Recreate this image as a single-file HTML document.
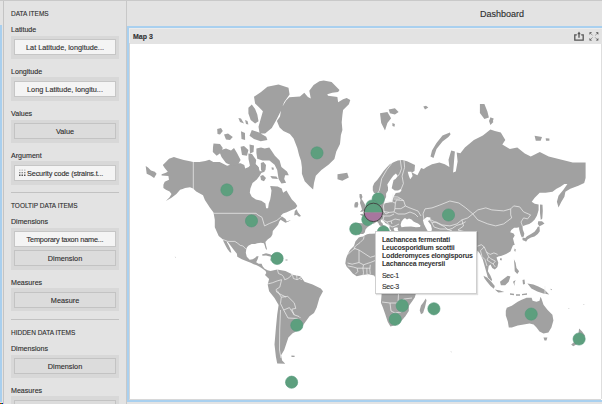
<!DOCTYPE html>
<html><head><meta charset="utf-8">
<style>
*{margin:0;padding:0;box-sizing:border-box}
html,body{width:602px;height:404px;overflow:hidden;background:#e3e3e3;font-family:"Liberation Sans",sans-serif;color:#333}
.abs{position:absolute}
#topline{left:0;top:0;width:602px;height:1px;background:#c9c9c9}
#lstrip{left:0;top:25px;width:2px;height:377px;background:#a9cfee}
#rgb{left:0;top:403px;width:3px;height:1px;background:linear-gradient(90deg,#e00 0,#e00 1px,#0b0 1px,#0b0 2px,#00d 2px)}
#lpanel{left:3px;top:1px;width:124px;height:403px;background:#e3e3e3;border-left:1px solid #c4c4c4;border-right:1px solid #c8c8c8}
.t{position:absolute;font-size:7.1px;white-space:nowrap;color:#2e2e2e;line-height:10px;-webkit-text-stroke:0.12px #2e2e2e}
.hd{letter-spacing:0;transform:scaleX(0.915);transform-origin:0 0}
.cont{position:absolute;left:11px;width:108px;background:#d8d8d8}
.btn{position:absolute;left:3px;width:102px;height:16px;border:1px solid #c6c6c6;font-size:7.3px;text-align:center;line-height:15px;color:#2e2e2e;white-space:nowrap;-webkit-text-stroke:0.12px #2e2e2e}
.w{background:#f4f4f4}
.g{background:#dcdcdc;border-color:#c3c3c3}
.sep{position:absolute;left:11px;width:108px;height:1px;background:#c2c2c2}
#title{left:127px;top:1px;width:475px;height:25px}
#map{left:127px;top:26px;width:475px;height:376px;border:2px solid #a9d0ef;border-right:none;background:#fff}
#mhead{left:0;top:0;width:473px;height:16px;background:#e3e3e3;border-top:1px solid #ececec;border-left:1px solid #ececec}
#rline{left:601px;top:44px;width:1px;height:355px;background:#dedede}
#mapsvg{position:absolute;left:129px;top:44px;width:472px;height:355px;overflow:hidden}
#tip{position:absolute;left:375px;top:231px;width:102px;height:63px;background:#fff;border:1px solid #cfcfcf;box-shadow:1px 1px 1px rgba(0,0,0,0.12)}
#tip div{position:absolute;left:6px;font-size:7px;white-space:nowrap;color:#2b2b2b;line-height:8px}
#tip .b{font-weight:bold;letter-spacing:-0.2px;color:#333}
#tip .s{letter-spacing:-0.3px;-webkit-text-stroke:0.1px #2b2b2b}
</style></head><body>
<div class="abs" id="topline"></div>
<div class="abs" id="lpanel"></div>
<div class="abs" id="lstrip"></div>
<div class="abs" id="rgb"></div>

<div class="t hd" style="left:11px;top:9px">DATA ITEMS</div>
<div class="t" style="left:11px;top:25px">Latitude</div>
<div class="cont" style="top:36px;height:23px"><div class="btn w" style="top:3px">Lat Latitude, longitude...</div></div>
<div class="t" style="left:11px;top:67px">Longitude</div>
<div class="cont" style="top:77px;height:24px"><div class="btn w" style="top:4px">Long Latitude, longitu...</div></div>
<div class="t" style="left:11px;top:109px">Values</div>
<div class="cont" style="top:120px;height:23px"><div class="btn g" style="top:3px">Value</div></div>
<div class="t" style="left:11px;top:151px">Argument</div>
<div class="cont" style="top:161px;height:24px"><div class="btn w" style="top:4px;text-align:left;padding-left:12px;letter-spacing:-0.15px">Security code (strains.t...</div><svg class="abs" style="left:0;top:0" width="108" height="24"><g><rect x="8" y="8.5" width="1.5" height="1.3" fill="#c4c4c4"/><rect x="10.5" y="8.5" width="1.5" height="1.3" fill="#c4c4c4"/><rect x="13" y="8.5" width="1.5" height="1.3" fill="#c4c4c4"/><rect x="8" y="11" width="1.5" height="1.3" fill="#8a8a8a"/><rect x="10.5" y="11" width="1.5" height="1.3" fill="#8a8a8a"/><rect x="13" y="11" width="1.5" height="1.3" fill="#8a8a8a"/><rect x="8" y="13.5" width="1.5" height="1.5" fill="#555"/><rect x="10.5" y="13.5" width="1.5" height="1.5" fill="#555"/><rect x="13" y="13.5" width="1.5" height="1.5" fill="#555"/></g></svg></div>
<div class="sep" style="top:192px"></div>
<div class="t hd" style="left:11px;top:201px">TOOLTIP DATA ITEMS</div>
<div class="t" style="left:11px;top:217px">Dimensions</div>
<div class="cont" style="top:228px;height:42px"><div class="btn w" style="top:3px;letter-spacing:-0.17px">Temporary taxon name...</div><div class="btn g" style="top:22px">Dimension</div></div>
<div class="t" style="left:11px;top:278px">Measures</div>
<div class="cont" style="top:288px;height:23px"><div class="btn g" style="top:4px">Measure</div></div>
<div class="sep" style="top:319px"></div>
<div class="t hd" style="left:11px;top:328px">HIDDEN DATA ITEMS</div>
<div class="t" style="left:11px;top:344px">Dimensions</div>
<div class="cont" style="top:355px;height:23px"><div class="btn g" style="top:3px">Dimension</div></div>
<div class="t" style="left:11px;top:386px">Measures</div>
<div class="cont" style="top:396px;height:23px"><div class="btn g" style="top:4px">&nbsp;</div></div>

<div class="abs" id="title"><div class="t" style="left:353px;top:7px;font-size:9px;line-height:12px">Dashboard</div></div>
<div class="abs" id="map">
  <div class="abs" id="mhead"><div class="t" style="left:3px;top:3px;font-size:7px;font-weight:bold;color:#333">Map 3</div></div>
</div>
<div class="abs" id="rline"></div>
<div class="abs" style="left:129px;top:43px;width:1px;height:357px;background:#d4d4d4"></div>
<div class="abs" style="left:129px;top:399px;width:472px;height:1px;background:#d8d8d8"></div>
<svg class="abs" style="left:570px;top:28px" width="32" height="16" viewBox="570 28 32 16"><g fill="none" stroke="#555" stroke-width="1.3"><path d="M576.8,34.9 H574.8 V40.2 H583.2 V34.9 H581.2"/><path d="M579,37.8 V33"/></g><path d="M577.3,34.2 L579,31.6 L580.7,34.2Z" fill="#555"/><g fill="#4a4a4a"><path d="M589.5,32.3 L592,32.3 L589.5,34.8Z"/><path d="M598.3,32.3 L595.8,32.3 L598.3,34.8Z"/><path d="M589.5,40.5 L592,40.5 L589.5,38Z"/><path d="M598.3,40.5 L595.8,40.5 L598.3,38Z"/></g><g stroke="#888" stroke-width="0.8"><path d="M590.5,33.3 L592.6,35.4 M597.3,33.3 L595.2,35.4 M590.5,39.5 L592.6,37.4 M597.3,39.5 L595.2,37.4"/></g></svg>
<div id="mapsvg"><svg width="472" height="355" viewBox="129 44 472 355" style="position:absolute;left:0;top:0">
<g fill="#a1a1a1" stroke="none">
<path d="M162.8,165.0 L165.9,161.9 L169.0,158.8 L173.9,157.0 L177.7,158.2 L183.8,160.0 L190.0,161.3 L193.1,161.9 L199.4,161.9 L205.3,160.9 L209.3,159.8 L213.3,161.9 L219.7,162.0 L227.1,165.7 L234.6,163.5 L240.6,163.2 L244.3,165.1 L245.2,168.6 L248.7,166.9 L251.3,163.9 L253.0,162.1 L255.6,164.3 L256.9,165.2 L258.6,167.3 L259.5,171.2 L265.0,171.0 L268.8,172.0 L270.2,185.9 L277.7,186.5 L281.7,188.6 L283.1,192.7 L286.5,190.6 L288.5,194.0 L291.9,199.5 L295.4,203.0 L297.3,206.1 L295.4,208.6 L290.5,210.5 L286.8,212.3 L283.0,213.6 L280.6,216.0 L282.4,216.7 L285.5,219.1 L286.8,221.6 L291.1,219.8 L288.6,221.6 L285.5,222.8 L280.6,219.8 L279.3,221.6 L278.1,224.7 L275.4,228.0 L272.8,230.9 L272.4,234.6 L271.0,236.9 L267.6,239.5 L265.4,242.1 L266.1,245.8 L266.9,248.7 L266.5,249.9 L265.4,248.0 L264.6,245.0 L263.9,243.2 L260.9,242.8 L257.2,243.2 L255.0,243.9 L251.7,243.9 L248.7,245.4 L247.2,246.9 L246.3,248.9 L245.8,252.8 L246.8,256.8 L249.7,259.8 L252.7,259.3 L255.2,257.8 L256.7,256.3 L258.6,256.3 L257.6,259.3 L256.2,262.2 L258.6,263.7 L261.6,263.7 L262.6,266.2 L264.6,268.7 L267.5,270.2 L270.5,271.1 L277.2,269.5 L285.4,270.9 L293.6,275.0 L300.4,276.3 L304.5,281.8 L312.6,284.5 L320.8,288.6 L323.0,291.3 L319.4,298.1 L316.7,307.6 L314.0,313.1 L309.5,316.3 L303.2,325.0 L297.6,330.8 L292.6,333.2 L288.4,337.4 L286.3,343.7 L284.2,350.0 L281.1,355.3 L282.1,360.5 L285.3,363.7 L277.2,363.5 L275.9,356.7 L274.5,344.4 L275.9,328.1 L277.2,314.5 L278.6,304.9 L274.5,298.1 L269.1,291.3 L267.7,284.5 L269.1,279.1 L265.0,275.0 L266.3,273.1 L265.6,271.1 L262.6,268.7 L259.6,266.7 L256.7,265.2 L253.7,264.2 L250.7,262.7 L246.8,261.2 L241.8,259.3 L237.3,256.8 L236.9,253.8 L233.9,249.9 L230.9,245.9 L227.9,241.9 L226.5,241.5 L228.5,245.0 L230.2,248.5 L231.4,252.8 L229.9,252.3 L227.4,248.9 L225.5,245.4 L223.5,241.4 L223.2,239.7 L218.7,235.9 L214.8,227.2 L214.8,219.8 L213.5,212.4 L209.8,207.4 L204.9,200.0 L203.0,195.3 L196.2,191.6 L193.1,188.5 L190.0,187.3 L185.1,187.9 L182.6,189.1 L180.1,189.7 L176.4,194.1 L171.5,197.8 L165.9,200.9 L169.6,197.2 L171.5,194.1 L169.6,191.6 L165.9,189.7 L163.4,187.9 L163.4,184.8 L164.7,181.7 L169.0,179.8 L168.4,176.1 L161.6,175.5 L161.6,174.3 L165.3,173.0 L167.8,171.8 L164.7,168.1Z M379.2,192.8 L376.8,193.5 L374.0,193.0 L372.8,190.5 L372.8,186.6 L374.3,182.9 L377.4,179.8 L380.5,175.5 L383.6,171.1 L386.7,167.4 L389.8,164.3 L394.1,161.9 L397.8,160.6 L402.1,160.0 L407.1,161.2 L410.8,163.1 L415.0,165.0 L414.5,171.0 L412.0,172.5 L417.4,175.3 L421.1,168.0 L423.8,168.9 L426.6,167.0 L432.0,164.3 L439.4,162.5 L444.8,164.3 L449.4,167.0 L448.5,159.7 L451.2,150.6 L454.9,151.5 L454.0,161.6 L453.1,172.5 L455.8,171.6 L457.6,161.6 L456.7,152.4 L460.4,153.3 L464.9,147.4 L473.9,139.9 L482.9,135.4 L490.4,129.4 L494.9,130.9 L500.8,132.4 L505.3,139.9 L502.3,144.4 L509.8,148.9 L517.3,147.4 L524.8,153.4 L530.8,156.4 L539.8,151.9 L548.7,156.4 L560.7,159.4 L572.7,162.4 L585.6,162.4 L585.6,177.9 L584.2,182.9 L578.3,185.8 L570.3,188.8 L565.4,191.8 L564.4,196.7 L561.4,201.7 L558.5,207.6 L556.9,201.7 L558.5,195.7 L563.4,189.8 L567.4,183.9 L564.4,183.9 L560.4,186.8 L556.5,188.8 L552.5,191.8 L545.6,192.8 L539.7,192.8 L534.7,197.7 L531.7,201.7 L534.7,203.7 L538.6,204.5 L538.6,210.0 L537.0,215.6 L534.7,219.5 L531.9,222.3 L529.2,223.9 L525.8,225.1 L522.5,226.2 L522.8,229.5 L524.3,233.4 L523.8,236.5 L521.7,237.3 L520.4,234.0 L519.6,231.0 L519.1,229.0 L519.1,227.3 L516.9,227.8 L514.1,227.8 L511.3,230.1 L510.2,232.3 L513.6,233.4 L514.7,235.6 L513.0,238.4 L514.7,245.0 L513.0,245.3 L510.4,251.4 L506.1,254.0 L501.7,255.7 L498.3,256.6 L496.5,257.5 L498.3,262.7 L497.4,267.0 L494.8,269.6 L492.2,267.9 L490.5,264.4 L488.7,266.1 L487.9,271.3 L490.5,275.7 L492.2,280.0 L491.3,280.9 L487.9,277.4 L486.1,271.3 L484.4,265.3 L482.7,259.2 L480.1,254.0 L477.5,250.5 L476.0,262.0 L445.0,285.0 L420.0,290.0 L416.0,293.0 L415.6,294.5 L414.9,297.2 L412.2,301.3 L408.8,306.1 L408.8,310.9 L405.4,316.3 L401.3,321.1 L395.9,325.1 L390.4,326.5 L387.7,321.7 L385.0,313.6 L382.9,307.4 L380.9,302.7 L381.6,294.5 L378.0,284.0 L375.0,277.0 L374.1,275.5 L368.8,274.2 L362.1,274.9 L356.7,276.2 L352.7,273.5 L349.4,269.5 L346.7,266.8 L345.3,263.5 L346.0,258.8 L347.4,254.8 L350.0,250.1 L354.0,246.1 L355.4,241.4 L358.7,237.4 L363.4,236.0 L359.0,235.0 L358.1,234.2 L356.8,233.2 L354.8,233.5 L354.2,230.9 L354.9,228.5 L355.2,226.9 L354.4,223.9 L355.5,223.2 L358.8,222.9 L362.3,223.2 L363.8,223.1 L364.3,221.2 L364.3,218.8 L363.1,216.4 L359.9,214.4 L362.1,213.7 L363.4,214.1 L363.8,212.0 L366.0,212.4 L367.8,211.1 L368.1,209.5 L370.1,208.8 L371.3,207.2 L371.7,205.6 L373.7,204.7 L376.2,204.3 L376.4,202.5 L375.8,200.3 L375.7,197.9 L377.4,196.6 L378.8,195.4 L380.2,195.4 L379.5,193.6 L378.9,191.2 L377.4,192.4 L375.6,194.3Z M505.8,310.7 L506.8,307.7 L511.8,305.7 L517.7,301.8 L521.7,299.8 L526.6,297.8 L531.6,297.8 L532.6,300.8 L536.5,301.8 L539.5,300.8 L540.5,296.8 L541.5,298.8 L543.5,304.8 L547.4,309.7 L552.4,314.7 L553.4,320.6 L551.4,327.5 L548.4,332.5 L543.5,333.5 L539.5,331.5 L536.5,327.5 L533.6,324.6 L529.6,323.6 L523.7,324.6 L517.7,325.5 L511.8,327.5 L508.8,327.5 L507.8,321.6 L505.8,315.6Z "/>
</g>
<path fill="#ffffff" d="M250.4,188.6 L252.5,183.1 L256.6,179.7 L259.3,176.3 L261.3,172.9 L265.4,170.9 L268.8,168.2 L271.5,166.1 L274.3,165.4 L277.0,169.5 L275.6,172.9 L272.2,176.3 L270.9,179.0 L274.3,180.4 L280.4,183.1 L285.8,184.5 L270.2,185.9 L271.5,190.6 L270.9,195.4 L270.2,199.5 L268.8,203.5 L268.1,208.3 L266.1,208.3 L265.4,203.5 L261.3,200.8 L255.9,199.5 L251.8,196.7 L249.8,192.7Z M359.0,235.0 L360.4,233.9 L363.1,233.9 L364.8,232.6 L365.4,229.7 L366.9,227.7 L368.5,226.5 L369.7,225.2 L369.5,223.6 L371.7,223.2 L373.7,223.7 L375.6,222.6 L376.7,221.5 L378.4,223.1 L379.2,224.9 L380.8,226.1 L382.9,227.2 L384.9,228.6 L385.0,230.5 L385.2,231.9 L386.1,231.2 L386.8,230.1 L386.6,228.2 L388.4,228.6 L387.7,227.7 L385.6,226.4 L385.3,225.7 L383.1,224.9 L382.4,223.1 L380.9,221.9 L380.8,220.0 L382.5,219.3 L382.8,220.7 L384.0,221.2 L385.2,223.1 L387.2,223.9 L388.4,224.9 L389.6,225.9 L389.5,228.2 L390.4,229.4 L391.2,230.7 L391.9,232.3 L392.3,233.8 L393.3,234.4 L394.0,233.0 L394.8,232.1 L395.1,231.6 L393.8,229.9 L393.8,228.0 L394.9,227.7 L395.7,227.4 L397.6,227.5 L397.9,228.5 L397.7,229.7 L398.5,231.0 L399.0,232.7 L400.0,233.8 L401.8,234.7 L403.2,233.8 L404.9,234.2 L407.3,234.5 L409.8,233.8 L409.7,236.2 L408.6,239.4 L407.9,241.6 L405.1,242.0 L402.0,242.3 L396.6,241.5 L393.9,240.3 L390.2,240.6 L389.6,243.0 L387.2,242.3 L384.5,240.5 L381.7,239.6 L379.2,238.7 L378.4,237.2 L379.2,236.1 L378.6,234.2 L379.2,233.5 L377.8,233.0 L375.6,233.6 L371.9,233.8 L369.5,233.8 L367.0,234.2 L365.1,235.3 L363.0,236.4 L360.3,236.2 L359.3,235.2Z M400.6,225.0 L401.5,221.5 L403.5,219.0 L405.0,218.0 L407.0,219.5 L409.0,218.5 L411.5,219.5 L413.5,221.5 L415.5,222.5 L418.0,223.5 L420.5,225.5 L420.0,227.0 L416.0,227.2 L411.0,226.5 L405.0,226.8 L401.5,227.2Z M422.9,220.0 L426.9,217.0 L430.4,217.5 L430.4,219.5 L427.9,221.0 L430.9,224.9 L431.9,228.9 L431.4,231.4 L427.9,231.4 L425.9,227.9 L423.9,223.9Z M393.5,175.5 L395.9,173.6 L397.8,176.1 L395.5,179.0 L393.6,180.0 L392.5,184.5 L391.7,188.2 L394.7,190.4 L398.0,190.4 L401.0,188.9 L401.4,190.8 L399.5,192.6 L395.8,193.0 L394.0,196.0 L392.8,199.3 L392.1,202.3 L389.9,202.3 L386.1,203.0 L383.9,203.8 L384.7,199.7 L386.1,197.1 L386.1,193.4 L388.0,190.4 L388.0,187.4 L387.3,184.5 L388.7,182.2 L390.2,180.0 L391.6,178.0Z M407.7,171.8 L411.4,171.8 L412.6,176.1 L410.2,179.2 L408.9,176.1Z"/>
<path fill="#a1a1a1" d="M145.7,165.9 L148.0,167.5 L151.0,170.6 L154.8,171.8 L156.6,173.7 L154.1,178.0 L150.4,175.5 L146.7,173.7 L146.1,169.3Z M213.5,143.5 L220.0,144.0 L222.8,148.0 L220.5,153.0 L216.7,155.7 L212.8,152.0 L213.0,147.0Z M221.0,150.0 L226.0,148.5 L231.0,150.5 L234.0,148.0 L237.0,153.0 L240.6,160.0 L238.0,164.5 L232.0,165.7 L226.0,163.0 L221.5,157.0 L219.5,152.0Z M217.2,129.0 L221.0,127.9 L222.8,131.0 L220.0,134.6 L217.5,134.0Z M224.0,134.5 L228.0,133.5 L232.8,137.0 L230.0,140.1 L226.0,139.5Z M241.0,131.2 L245.0,133.0 L245.1,140.1 L241.5,139.0Z M238.4,118.0 L241.0,118.5 L244.0,123.4 L240.0,122.0Z M245.1,120.1 L247.5,121.0 L248.4,124.5 L246.0,124.0Z M240.6,146.8 L244.0,146.0 L248.4,150.0 L247.0,155.7 L242.0,155.0Z M249.5,144.6 L254.0,145.5 L253.5,152.0 L250.0,153.5Z M248.4,153.5 L252.0,154.0 L256.2,160.0 L255.0,169.0 L250.0,166.0 L248.5,159.0Z M254.0,96.7 L260.7,92.2 L267.4,86.7 L278.5,84.5 L288.5,87.8 L289.6,94.5 L284.1,102.3 L280.7,111.2 L276.3,120.1 L271.8,127.9 L265.1,133.5 L259.6,133.5 L258.5,126.8 L260.7,119.0 L262.9,111.2 L258.5,106.7 L255.1,103.4Z M248.4,107.8 L251.8,104.5 L255.1,109.0 L257.3,114.5 L258.5,121.2 L255.1,123.4 L250.7,120.1 L248.4,113.4Z M251.8,130.1 L258.5,132.3 L266.2,136.8 L267.4,140.1 L260.7,141.2 L254.0,139.0 L249.5,135.7Z M256.4,148.4 L261.0,147.4 L264.7,148.4 L269.3,147.4 L271.2,150.2 L274.9,155.8 L279.6,160.4 L281.4,166.9 L287.0,171.6 L288.8,175.3 L285.1,175.3 L284.2,179.0 L286.1,182.7 L281.4,183.6 L278.6,179.0 L277.2,169.9 L274.6,164.7 L269.4,160.4 L262.5,160.4 L257.3,158.7 L256.4,153.0Z M248.7,155.2 L251.3,156.5 L253.0,161.3 L255.6,164.3 L258.6,167.3 L259.5,171.2 L258.6,174.2 L256.5,177.7 L253.9,181.2 L252.0,179.0 L254.0,174.0 L256.0,170.0 L252.0,166.0 L249.0,160.0Z M260.8,163.0 L263.5,162.1 L266.0,165.0 L265.5,170.0 L263.0,172.5 L261.0,170.0Z M260.3,176.0 L263.0,175.1 L266.0,178.0 L264.0,181.2 L261.0,180.0Z M270.3,176.0 L276.4,176.5 L278.0,179.0 L272.0,178.6Z M271.6,167.3 L273.8,167.8 L273.5,169.9 L271.8,169.5Z M289.3,97.2 L300.0,96.4 L304.3,92.8 L307.9,97.1 L310.8,98.6 L309.3,90.7 L313.6,84.9 L319.4,81.3 L323.7,80.6 L331.6,82.1 L339.5,90.0 L338.1,92.1 L332.3,92.8 L327.3,94.3 L328.0,95.7 L333.8,96.4 L337.4,97.1 L338.1,102.2 L343.1,99.3 L346.7,97.9 L350.3,100.0 L348.9,104.3 L343.1,110.1 L342.4,115.1 L341.7,122.3 L342.4,130.0 L340.9,134.9 L340.0,144.1 L336.3,151.6 L334.4,159.0 L328.8,164.6 L321.4,170.1 L315.8,175.7 L314.0,183.1 L313.1,189.6 L309.3,185.9 L304.7,181.3 L301.9,173.8 L301.9,167.3 L301.0,160.8 L299.1,155.3 L297.3,147.9 L293.6,138.6 L289.9,133.9 L283.4,131.1 L279.6,127.4 L276.9,120.9 L280.0,116.4 L281.3,108.4 L286.1,100.4Z M337.5,174.3 L347.2,172.7 L348.8,177.5 L342.3,180.8 L337.5,179.2Z M294.8,211.1 L296.7,209.2 L297.9,212.3 L301.0,216.0 L299.1,216.7 L296.7,214.8 L294.2,215.4Z M262.0,254.5 L266.0,253.3 L270.0,254.3 L274.0,256.3 L278.0,258.3 L276.0,259.0 L271.0,256.8 L266.0,255.6 L262.5,255.8Z M276.0,258.0 L282.0,258.5 L283.0,261.0 L277.0,261.0Z M270.0,259.5 L272.5,259.5 L272.0,260.5 L270.0,260.3Z M285.5,259.5 L287.5,259.5 L287.5,260.5 L285.5,260.5Z M359.5,194.0 L361.5,194.0 L362.5,197.0 L361.5,199.0 L363.0,201.0 L365.0,204.5 L366.0,207.0 L366.5,210.0 L363.0,211.5 L360.0,212.0 L362.0,209.5 L361.0,206.0 L360.0,203.0 L360.5,200.0 L359.5,197.0Z M355.0,202.5 L357.5,201.7 L358.4,204.0 L357.5,207.5 L354.5,207.6 L354.3,205.0Z M380.0,113.2 L387.4,112.0 L391.1,118.2 L387.4,123.1 L385.0,130.5 L381.2,123.1Z M388.7,109.5 L394.9,108.3 L398.6,112.0 L394.9,114.5 L389.9,113.2Z M392.4,123.1 L394.9,124.0 L394.5,126.8 L392.4,126.0Z M423.3,106.5 L426.0,105.8 L428.3,107.5 L425.0,109.5Z M449.9,132.4 L450.5,134.5 L448.4,136.9 L442.5,141.4 L436.5,148.9 L433.5,157.9 L430.5,156.4 L432.0,150.4 L436.5,142.9 L442.5,135.4Z M479.9,104.0 L484.4,104.0 L487.4,111.5 L488.9,117.5 L484.4,119.0 L479.9,113.0Z M490.4,117.5 L493.4,122.0 L490.4,124.9 L489.0,121.0Z M534.6,135.8 L542.0,137.0 L540.7,140.7 L535.8,140.7Z M545.7,138.3 L549.4,138.5 L549.4,140.7 L546.0,140.7Z M490.0,117.2 L493.7,118.5 L492.5,122.2Z M425.8,298.6 L426.5,300.6 L425.1,306.8 L423.1,312.9 L421.0,314.3 L419.7,310.2 L421.0,305.4 L423.1,302.7Z M538.2,221.2 L542.0,221.3 L544.5,223.4 L542.0,225.0 L539.5,226.2 L537.8,224.0Z M539.5,226.5 L539.8,231.2 L537.8,234.0 L534.5,236.4 L531.0,237.6 L527.8,239.3 L526.0,241.8 L524.5,240.5 L524.8,238.6 L527.0,236.2 L531.0,234.0 L534.5,231.8 L536.8,228.8 L537.8,226.8Z M522.5,237.5 L525.0,238.0 L524.5,241.0 L522.5,240.0Z M540.0,204.5 L542.5,204.8 L542.8,211.0 L542.3,218.5 L540.8,220.0 L540.0,213.0Z M514.7,248.5 L515.8,249.5 L515.2,252.0 L514.2,250.5Z M500.0,258.3 L502.0,258.5 L501.5,260.5 L500.0,260.0Z M513.9,259.2 L515.6,262.7 L516.5,267.9 L519.1,271.3 L517.3,273.9 L514.7,271.3 L514.5,266.0Z M483.5,275.7 L487.0,277.4 L491.3,281.7 L494.8,286.1 L493.9,288.7 L490.5,286.1 L487.0,281.7 L484.4,278.3Z M494.8,289.5 L500.0,290.4 L504.3,292.1 L498.3,292.5Z M500.0,281.7 L503.5,279.1 L507.8,275.7 L510.4,276.5 L508.7,281.7 L505.2,285.2 L500.9,285.2Z M513.0,281.7 L515.6,280.0 L514.5,283.0 L514.7,286.1Z M527.4,283.5 L533.4,284.5 L538.3,286.4 L544.3,289.4 L549.2,294.4 L543.3,293.4 L537.3,291.4 L531.4,288.4Z M543.5,337.4 L547.4,337.4 L546.4,340.4 L544.5,340.4Z M579.1,328.5 L582.1,331.5 L585.0,335.4 L583.1,339.4 L578.0,337.0Z M571.2,344.4 L576.1,340.4 L578.1,343.4 L573.2,346.3Z M291.4,355.6 L294.7,355.8 L294.5,357.0 L291.5,357.0Z M174.7,256.7 L175.8,256.9 L175.4,257.8Z M450.5,351.5 L451.6,351.7 L451.2,352.6Z M568.2,308.2 L569.4,308.4 L569.0,309.3Z M583.2,304.2 L584.4,304.4 L584.0,305.3Z M550.0,288.8 L552.0,289.2 L551.5,290.3Z M510.0,293.3 L514.0,293.8 L514.0,295.3 L510.0,294.8Z M516.0,294.2 L520.0,294.2 L520.0,295.8 L516.0,295.8Z M522.0,294.0 L527.0,293.2 L527.0,294.8 L522.0,295.3Z M522.5,280.0 L524.5,279.5 L525.0,284.0 L523.0,284.5Z"/>
<path fill="none" stroke="#f2f2f2" stroke-width="0.7" stroke-linejoin="round" d="M193.3,162.0 L193.3,189.0 M213.6,213.3 L256.0,213.3 L258.0,215.0 L262.0,217.3 L264.5,225.9 L269.4,223.5 L276.9,220.4 L280.6,217.3 L283.0,215.5 M223.0,239.5 L227.9,241.4 L234.9,241.4 L237.8,243.4 L240.3,245.4 L242.8,245.9 L245.8,248.9 M277.3,269.2 L278.5,273.5 L281.6,274.8 L283.5,276.6 L284.7,279.7 L287.8,278.5 L290.9,276.0 L292.1,273.5 M267.4,284.0 L272.3,282.8 L277.3,280.9 L281.6,279.7 L279.8,287.1 L276.0,289.6 L276.7,292.1 L281.0,294.6 L285.9,297.0 M292.1,273.5 L293.4,278.5 L297.1,279.7 L299.6,278.5 L302.0,279.7 M296.6,274.7 L297.1,279.7 M300.8,276.5 L299.6,278.5 M277.3,290.7 L281.3,297.2 L287.7,296.4 L294.2,302.8 L295.8,308.4 L291.8,309.2 L294.2,314.9 L299.0,316.5 L300.6,318.1 M281.3,297.2 L280.5,303.6 L283.7,310.0 L289.4,307.6 L294.2,314.9 M280.5,310.0 L279.7,330.0 L279.5,350.0 L281.0,358.0 M283.7,310.0 L288.0,318.0 L297.0,318.5 L300.6,322.0 M423.0,213.9 L425.0,208.9 L432.0,207.9 L439.9,205.0 L449.9,201.0 L458.9,203.0 L465.8,207.9 L472.8,213.9 M423.0,213.9 L424.0,219.9 L430.0,219.9 L432.0,222.9 L436.0,221.9 L441.9,224.9 L449.9,225.9 L456.9,223.9 L461.9,219.9 L467.8,217.9 L472.8,213.9 M472.8,213.9 L477.8,209.9 L485.8,207.9 L491.8,209.9 L503.7,210.9 L510.7,208.9 L513.7,205.9 L519.7,206.9 L523.6,211.9 L530.6,214.9 L527.6,218.9 L523.6,217.9 L521.0,222.0 L522.5,226.2 M472.8,213.9 L477.8,219.9 L487.8,223.9 L495.7,225.9 L503.7,223.9 L511.7,217.9 L510.7,214.9 L510.7,208.9 M432.0,222.9 L434.0,227.0 L440.0,229.0 L447.0,229.0 L452.0,231.0 M461.9,219.9 L463.5,226.0 L458.0,230.0 L466.0,232.0 M364.1,236.3 L363.5,239.1 L360.1,242.5 L355.5,246.0 L353.8,248.2 L359.0,250.0 L370.3,257.3 L376.0,255.6 M347.0,255.1 L352.1,250.5 L355.5,248.2 M359.0,250.0 L359.0,262.5 L352.1,264.2 L347.6,263.0 M359.0,262.5 L363.5,264.8 L366.9,263.6 L370.3,262.5 L376.0,260.2 M347.6,265.9 L353.3,267.0 L357.2,268.2 L357.8,271.6 L355.5,273.9 M363.5,264.8 L362.9,268.2 L363.5,272.7 L362.9,276.1 M366.9,268.2 L366.9,272.7 L367.5,276.1 M370.3,264.8 L369.8,269.3 L370.3,273.9 M357.2,268.2 L370.3,268.2 M398.5,294.0 L398.0,303.0 L390.0,303.0 L382.0,302.0 M390.0,303.0 L391.0,311.0 L395.0,313.0 L401.0,312.0 L406.0,306.0 M398.0,303.0 L404.0,299.0 L412.0,298.0 M363.6,219.6 L364.5,212.0 M384.4,202.3 L391.7,201.4 L395.4,203.2 L394.9,208.7 L394.0,211.9 L389.0,212.4 L383.9,211.5 L383.5,206.0 L384.4,202.3 M395.4,203.2 L396.3,200.0 L403.6,200.5 L405.4,206.0 L400.9,208.7 L394.9,208.7 M392.6,196.8 L398.0,197.0 L403.6,200.5 M391.7,201.4 L392.6,196.8 L393.0,193.5 M393.5,199.0 L400.0,199.0 M394.0,211.9 L398.0,214.0 L405.0,214.0 L410.0,212.0 L415.0,214.0 L418.0,217.0 M405.4,206.0 L410.0,208.0 L418.0,211.0 L421.0,216.0 M383.9,211.5 L386.0,214.0 L389.0,212.4 M380.0,214.5 L384.0,216.0 L390.0,216.0 L394.0,214.0 M384.0,216.0 L383.0,220.0 L387.0,222.0 L391.0,221.0 L395.0,219.0 L400.0,220.0 M387.0,222.0 L389.0,225.0 L392.0,227.0 L395.0,226.0 L399.0,224.0 M391.0,221.0 L392.0,224.0 M392.8,161.9 L386.7,169.9 L381.7,178.6 L380.5,184.8 L379.2,190.9 M400.3,160.0 L401.5,168.7 L399.7,173.6 L397.8,176.1 M404.0,160.5 L404.6,167.4 L402.1,176.1 L403.4,183.5 L400.9,189.7 M545.0,286.0 L545.0,294.0 M477.5,246.2 L481.3,244.7 L484.2,246.9 L486.5,252.1 L490.2,254.4 L493.9,252.9 L497.6,254.4 M484.2,246.9 L480.5,250.7 L482.0,256.6 L485.0,259.6 L487.0,266.0 M486.5,252.1 L488.7,256.6 L490.9,258.8 L495.4,261.1 L493.1,264.0 L495.4,267.0 M488.7,256.6 L487.0,260.0 L490.0,262.0 L493.1,264.0 M430.0,219.5 L434.5,221.7 L438.9,223.9 L444.9,226.9 L447.8,229.9 L452.3,228.4 L456.7,225.4 L461.9,223.9 L465.7,221.7"/>
<g fill="#5d9f7e" stroke="#53977a" stroke-width="0.6"><circle cx="317" cy="152.9" r="6.1"/><circle cx="226.9" cy="189.9" r="6.1"/><circle cx="251.5" cy="220.9" r="6.1"/><circle cx="277.1" cy="258.4" r="6.1"/><circle cx="296.8" cy="325.2" r="6.1"/><circle cx="291.6" cy="382.2" r="6.1"/><circle cx="378.2" cy="198.9" r="6.1"/><circle cx="372" cy="206" r="6.1"/><circle cx="367.8" cy="219.5" r="6.1"/><circle cx="355.8" cy="228.9" r="6.1"/><circle cx="383.4" cy="232" r="6.1"/><circle cx="448.5" cy="215" r="6.1"/><circle cx="402.2" cy="305.7" r="6.1"/><circle cx="395.2" cy="319.3" r="6.1"/><circle cx="433.9" cy="308.8" r="6.1"/><circle cx="531.2" cy="314.1" r="6.1"/><circle cx="579.1" cy="339" r="6.1"/></g>
<g>
<path d="M364.2,212.4 A9.2,9.2 0 0 1 382.6,212.4 Z" fill="#5d9f7e"/>
<path d="M364.2,212.4 A9.2,9.2 0 0 0 382.6,212.4 Z" fill="#a7769e"/>
<circle cx="373.4" cy="212.4" r="9.2" fill="none" stroke="#404040" stroke-width="0.9"/>
</g>
</svg></div>
<div id="tip">
<div class="b" style="top:4px">Lachancea fermentati</div>
<div class="b" style="top:12px">Leucosporidium scottii</div>
<div class="b" style="top:20px">Lodderomyces elongisporus</div>
<div class="b" style="top:28px">Lachancea meyersii</div>
<div class="s" style="top:40px">Sec-1</div>
<div class="s" style="top:51px">Sec-3</div>
</div>
</body></html>
